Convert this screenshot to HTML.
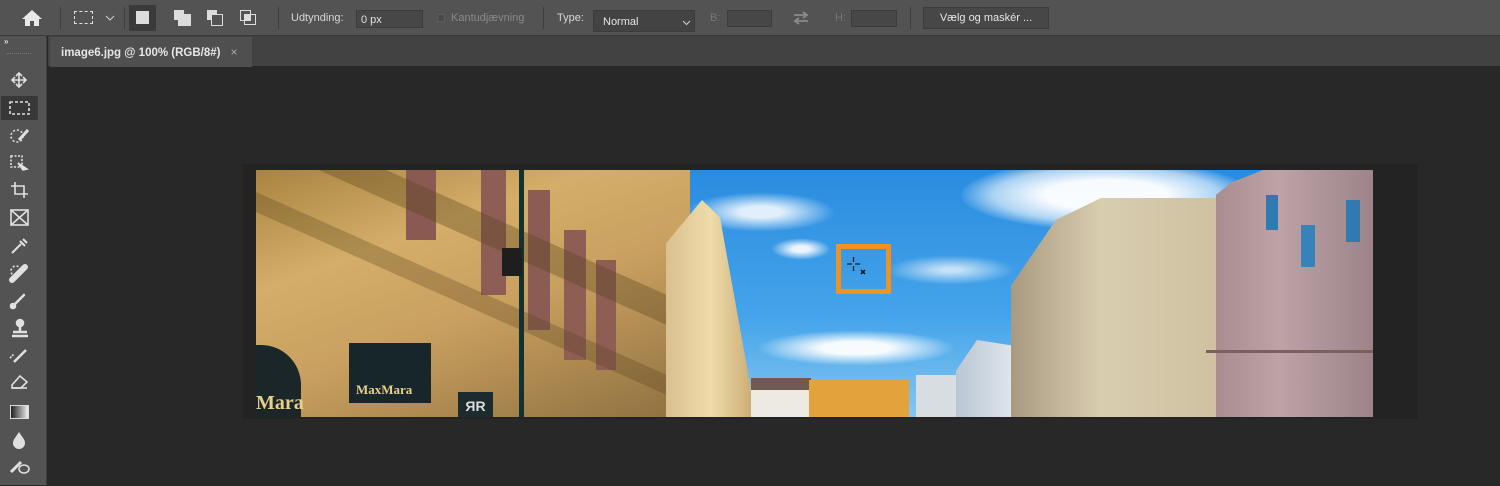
<!DOCTYPE html>
<html><head><meta charset="utf-8"><style>
*{margin:0;padding:0;box-sizing:border-box}
body{width:1500px;height:485px;overflow:hidden;background:#282828;font-family:"Liberation Sans",sans-serif;position:relative}
.abs{position:absolute}
#top{left:0;top:0;width:1500px;height:36px;background:#535353;border-bottom:1px solid #3a3a3a}
#tabbar{left:48px;top:36px;width:1452px;height:31px;background:#424242;border-bottom:1px solid #2a2a2a}
#tab{left:50px;top:37px;width:202px;height:30px;background:#4f4f4f;color:#e6e6e6;font-size:11.5px;font-weight:bold;padding:8px 0 0 11px}
#left{left:0;top:36px;width:47px;height:449px;background:#535353;border-right:1px solid #3d3d3d}
.sep{position:absolute;top:7px;width:1px;height:22px;background:#3f3f3f}
.lbl{position:absolute;top:12px;font-size:11px;color:#d6d6d6}
.inp{position:absolute;background:#474747;border:1px solid #3c3c3c}
.photo{left:256px;top:170px;width:1117px;height:247px;overflow:hidden}
.cl{position:absolute;border-radius:50%}
</style></head><body>
<div id="top" class="abs">
  <svg class="abs" style="left:21px;top:9px" width="22" height="18" viewBox="0 0 22 18"><path d="M11 1L1 10h3v7h5v-5h4v5h5v-7h3z" fill="#e8e8e8"/></svg>
  <div class="sep" style="left:60px"></div>
  <div class="abs" style="left:74px;top:11px;width:19px;height:13px;border:1.5px dashed #e0e0e0"></div>
  <svg class="abs" style="left:105px;top:15px" width="10" height="6"><path d="M1 1l4 4 4-4" stroke="#cfcfcf" fill="none"/></svg>
  <div class="sep" style="left:124px"></div>
  <div class="abs" style="left:129px;top:5px;width:27px;height:26px;background:#3a3a3a"></div>
  <div class="abs" style="left:136px;top:11px;width:13px;height:13px;background:#dcdcdc"></div>
  <div class="abs" style="left:174px;top:10px;width:10px;height:10px;background:#dcdcdc"></div>
  <div class="abs" style="left:178px;top:14px;width:13px;height:12px;background:#dcdcdc"></div>
  <div class="abs" style="left:207px;top:10px;width:10px;height:10px;background:#dcdcdc"></div>
  <div class="abs" style="left:211px;top:14px;width:12px;height:12px;border:1.5px solid #dcdcdc;background:#535353"></div>
  <div class="abs" style="left:240px;top:10px;width:11px;height:11px;border:1.5px solid #dcdcdc"></div>
  <div class="abs" style="left:244px;top:14px;width:12px;height:11px;border:1.5px solid #dcdcdc"></div>
  <div class="abs" style="left:244px;top:14px;width:7px;height:7px;background:#dcdcdc"></div>
  <div class="sep" style="left:278px"></div>
  <div class="lbl" style="left:291px">Udtynding:</div>
  <div class="inp" style="left:356px;top:10px;width:67px;height:18px;font-size:11px;color:#e0e0e0;padding:3px 4px">0 px</div>
  <div class="abs" style="left:437px;top:14px;width:8px;height:8px;background:#4a4a4a;border:1px solid #5c5c5c"></div>
  <div class="lbl" style="left:451px;color:#8a8a8a">Kantudjævning</div>
  <div class="sep" style="left:543px"></div>
  <div class="lbl" style="left:557px">Type:</div>
  <div class="inp" style="left:593px;top:10px;width:102px;height:22px;font-size:11px;color:#e6e6e6;padding:5px 9px;background:#434343">Normal
    <svg class="abs" style="left:88px;top:9px" width="9" height="6"><path d="M1 1l3.5 3.5L8 1" stroke="#cfcfcf" fill="none"/></svg></div>
  <div class="lbl" style="left:710px;color:#777">B:</div>
  <div class="inp" style="left:727px;top:10px;width:45px;height:17px"></div>
  <svg class="abs" style="left:792px;top:10px" width="18" height="16"><path d="M2 5h13M11 2l4 3-4 3M16 11H3M7 8l-4 3 4 3" stroke="#8a8a8a" stroke-width="1.8" fill="none"/></svg>
  <div class="lbl" style="left:835px;color:#777">H:</div>
  <div class="inp" style="left:851px;top:10px;width:46px;height:17px"></div>
  <div class="sep" style="left:910px"></div>
  <div class="abs" style="left:923px;top:7px;width:126px;height:22px;background:#474747;border:1px solid #3c3c3c;color:#e6e6e6;font-size:11px;text-align:center;padding-top:4px">Vælg og maskér ...</div>
</div>
<div id="tabbar" class="abs"></div>
<div id="tab" class="abs">image6.jpg @ 100% (RGB/8#)<span style="font-weight:normal;color:#aaa;margin-left:10px;font-size:12px">×</span></div>
<div id="left" class="abs">
  <div class="abs" style="left:4px;top:1px;color:#ddd;font-size:8px;font-weight:bold">»</div>
  <div class="abs" style="left:7px;top:17px;width:24px;height:2px;border-top:1px dotted #777"></div>
  <div class="abs" style="left:1px;top:60px;width:37px;height:24px;background:#383838"></div>
  <svg class="abs" style="left:0;top:0" width="47" height="449" fill="none" stroke="#e0e0e0" stroke-width="1.6">
    <path d="M19 37v14M12 44h14M16 40l3-3 3 3M16 48l3 3 3-3M15 41l-3 3 3 3M23 41l3 3-3 3"/>
    <rect x="10" y="66" width="19" height="12" stroke-dasharray="3 2"/>
    <circle cx="17" cy="100" r="6" stroke-dasharray="2 2"/><path d="M19 104l9-10" stroke-width="3"/>
    <rect x="11" y="120" width="11" height="11" stroke-dasharray="2 1.5"/><path d="M18 127l9 6-4 1z" fill="#e0e0e0"/>
    <path d="M15 146v12h13M11 150h13v12"/>
    <rect x="11" y="174" width="17" height="15"/><path d="M11 174l17 15M28 174l-17 15"/>
    <path d="M12 217l9-9M20 205l5 5M23 203l4 4" stroke-width="2"/>
    <path d="M12 244l13-13" stroke-width="6" stroke-linecap="round"/><circle cx="16" cy="235" r="5" stroke-dasharray="2 2"/>
    <path d="M13 270l11-11" stroke-width="2.5" stroke-linecap="round"/><circle cx="13" cy="270" r="2.5" fill="#e0e0e0"/>
    <path d="M13 296h14M12 300h16M20 290v6" stroke-width="2.5"/><circle cx="20" cy="287" r="3.5" fill="#e0e0e0"/>
    <path d="M14 326l12-12" stroke-width="2.5"/><path d="M10 322l4-4" stroke-dasharray="2 1"/>
    <path d="M12 349l8-9 7 6-6 6h-9z"/><path d="M12 352h15"/>
  </svg>
  <div class="abs" style="left:10px;top:369px;width:19px;height:14px;background:linear-gradient(90deg,#222,#eee);border:1px solid #ddd"></div>
  <svg class="abs" style="left:0;top:390px" width="47" height="60"><path d="M19 6c-4 6-6 8-6 11a6 6 0 0012 0c0-3-2-5-6-11z" fill="#e0e0e0"/><path d="M11 46l10-10" stroke="#e0e0e0" stroke-width="3"/><ellipse cx="24" cy="43" rx="5" ry="4" stroke="#e0e0e0" stroke-width="1.6" fill="none"/></svg>
</div>
<div class="abs" style="left:243px;top:164px;width:1175px;height:255px;background:#232323"></div>
<div class="abs photo">
  <div class="abs" style="left:0;top:0;width:1117px;height:247px;background:linear-gradient(180deg,#2a8ce0 0%,#45a4ea 60%,#86c7f0 100%)"></div>
  <!-- clouds -->
  <div class="cl" style="left:705px;top:-10px;width:290px;height:70px;background:radial-gradient(ellipse,rgba(255,255,255,.97) 30%,rgba(255,255,255,.6) 55%,rgba(255,255,255,0) 72%)"></div>
  <div class="cl" style="left:430px;top:22px;width:150px;height:40px;background:radial-gradient(ellipse,rgba(255,255,255,.85) 20%,rgba(255,255,255,0) 70%)"></div>
  <div class="cl" style="left:515px;top:68px;width:60px;height:22px;background:radial-gradient(ellipse,rgba(255,255,255,.9) 20%,rgba(255,255,255,0) 70%)"></div>
  <div class="cl" style="left:630px;top:85px;width:130px;height:30px;background:radial-gradient(ellipse,rgba(255,255,255,.7) 10%,rgba(255,255,255,0) 70%)"></div>
  <div class="cl" style="left:500px;top:160px;width:200px;height:36px;background:radial-gradient(ellipse,rgba(255,255,255,.95) 25%,rgba(255,255,255,0) 70%)"></div>
  <!-- left building -->
  <div class="abs" style="left:0;top:0;width:434px;height:247px;background:linear-gradient(160deg,#a8843e 0%,#d4ae68 30%,#c9a060 55%,#8e7040 100%);clip-path:polygon(0 0,100% 0,100% 100%,0 100%)"></div>
  <div class="abs" style="left:150px;top:0;width:30px;height:70px;background:#8a5a52"></div>
  <div class="abs" style="left:225px;top:0;width:25px;height:125px;background:#8e5e55"></div>
  <div class="abs" style="left:272px;top:20px;width:22px;height:140px;background:#8a5c54"></div>
  <div class="abs" style="left:308px;top:60px;width:22px;height:130px;background:#8e5e55"></div>
  <div class="abs" style="left:340px;top:90px;width:20px;height:110px;background:#8e5e55"></div>
  <div class="abs" style="left:0;top:40px;width:440px;height:30px;background:rgba(90,65,30,.35);transform:skewY(24deg)"></div>
  <div class="abs" style="left:0;top:120px;width:440px;height:20px;background:rgba(90,65,30,.3);transform:skewY(24deg)"></div>
  <div class="abs" style="left:0;top:175px;width:45px;height:72px;background:#1b2628;border-radius:0 40px 0 0"></div>
  <div class="abs" style="left:0;top:222px;color:#e9cf8a;font:bold 20px 'Liberation Serif',serif">Mara</div>
  <div class="abs" style="left:93px;top:173px;width:82px;height:60px;background:#17262a"></div>
  <div class="abs" style="left:100px;top:212px;color:#e8cf8a;font:bold 13px 'Liberation Serif',serif">MaxMara</div>
  <div class="abs" style="left:202px;top:222px;width:35px;height:25px;background:#1b2b2e;color:#ddd;font:bold 14px sans-serif;text-align:center;padding-top:6px">ЯR</div>
  <div class="abs" style="left:263px;top:0;width:5px;height:247px;background:#16302e"></div>
  <div class="abs" style="left:246px;top:78px;width:20px;height:28px;background:#1e1e1e"></div>
  <div class="abs" style="left:410px;top:30px;width:90px;height:217px;background:linear-gradient(90deg,#d9c090,#efdcaa,#c8a870);clip-path:polygon(0 20%,40% 0,60% 8%,100% 100%,0 100%)"></div>
  <div class="abs" style="left:495px;top:208px;width:60px;height:39px;background:#ede9e3"></div>
  <div class="abs" style="left:495px;top:208px;width:60px;height:12px;background:#6e5a50"></div>
  <div class="abs" style="left:553px;top:210px;width:100px;height:37px;background:#e4a23c"></div>
  <div class="abs" style="left:660px;top:205px;width:50px;height:42px;background:#d8dde2"></div>
  <div class="abs" style="left:700px;top:170px;width:70px;height:77px;background:linear-gradient(90deg,#b9c6d4,#e8ecf0);clip-path:polygon(30% 0,100% 10%,100% 100%,0 100%,0 40%)"></div>
  <div class="abs" style="left:755px;top:28px;width:225px;height:219px;background:linear-gradient(90deg,#a89a80,#d9cdb0 40%,#cdbf9e);clip-path:polygon(20% 10%,40% 0,100% 0,100% 100%,0 100%,0 40%)"></div>
  <div class="abs" style="left:960px;top:0;width:157px;height:247px;background:linear-gradient(90deg,#a98e90,#bda2a6 40%,#9c8488);clip-path:polygon(10% 5%,30% 0,100% 0,100% 100%,0 100%,0 10%)"></div>
  <div class="abs" style="left:1010px;top:25px;width:12px;height:35px;background:#2f7ab0"></div>
  <div class="abs" style="left:1045px;top:55px;width:14px;height:42px;background:#3583b8"></div>
  <div class="abs" style="left:1090px;top:30px;width:14px;height:42px;background:#2f7ab0"></div>
  <div class="abs" style="left:950px;top:180px;width:167px;height:3px;background:#7a6060"></div>
  <div class="abs" style="left:580px;top:74px;width:55px;height:50px;border:5px solid #ef9220"></div>
  <svg class="abs" style="left:588px;top:86px" width="24" height="22"><path d="M3 8h5M11 8h5M9.5 1v5M9.5 10v5" stroke="#222" stroke-width="1.3"/><path d="M17 14l4 4M21 14l-4 4" stroke="#111" stroke-width="1.5"/></svg>
</div>
</body></html>
